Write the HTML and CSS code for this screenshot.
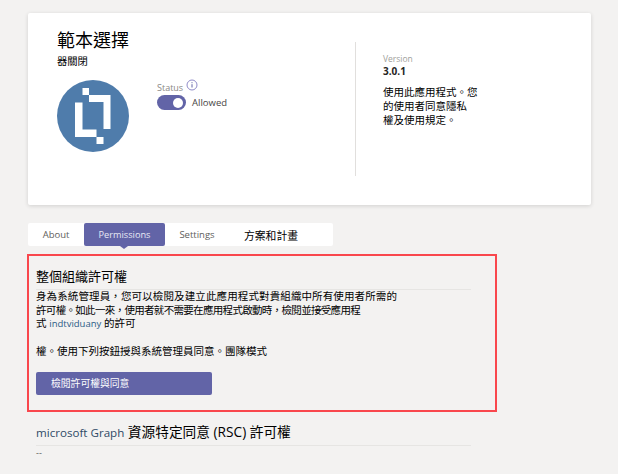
FILE: index.html
```html
<!DOCTYPE html>
<html lang="zh-Hant">
<head>
    <meta charset="UTF-8">
    <title>範本選擇器關閉</title>
    <link rel="stylesheet" href="styles.css">
</head>
<body>
    <div class="card">
        <div class="card-main">
            <div class="app-title">範本選擇</div>
            <div class="app-sub">器關閉</div>
            <div class="app-row">
                <svg class="logo" width="72" height="72" viewBox="0 0 72 72">
                    <circle cx="36" cy="36" r="36" fill="#4f7cab"/>
                    <path fill="#fff" d="M18 22.500h7.500v27h14v7.500h-21.500zM39.500 57h7v7h-7zM32 15h21.500v34h-7v-27h-14.500zM25.500 8h6.500v7h-6.500z"/>
                </svg>
                <div class="status">
                    <div class="status-label">Status
                        <svg class="info" width="12" height="12" viewBox="0 0 12 12">
                            <circle cx="6" cy="6" r="5" fill="none" stroke="#8f8bc8" stroke-width="1"/>
                            <path d="M6 5.200v3.300M6 3.200v1" stroke="#6264a7" stroke-width="1"/>
                        </svg>
                    </div>
                    <div class="status-row">
                        <span class="toggle"><span class="knob"></span></span>
                        <span class="allowed">Allowed</span>
                    </div>
                </div>
            </div>
        </div>
        <div class="card-side">
            <div class="version-label">Version</div>
            <div class="version">3.0.1</div>
            <p class="side-text">使用此應用程式。您<br>的使用者同意隱私<br>權及使用規定。</p>
        </div>
    </div>

    <div class="tabs">
        <div class="tab">About</div>
        <div class="tab active">Permissions</div>
        <div class="tab">Settings</div>
        <div class="tab dark">方案和計畫</div>
    </div>

    <div class="red-box">
        <h2 class="box-title">整個組織許可權</h2>
        <div class="box-text">
            <div class="line-wide">身為系統管理員，您可以檢閱及建立此應用程式對貴組織中所有使用者所需的</div>
            <div class="line-tight">許可權。如此一來，使用者就不需要在應用程式啟動時，檢閱並接受應用程</div>
            <div>式 <span class="latin">indtviduany</span> 的許可</div>
            <div class="line-gap">權。使用下列按鈕授與系統管理員同意。團隊模式</div>
        </div>
        <div class="review-btn">檢閱許可權與同意</div>
    </div>

    <div class="rsc">
        <h2 class="rsc-title"><span class="latin-title">microsoft Graph</span> 資源特定同意 (RSC) 許可權</h2>
        <div class="rsc-dash">--</div>
    </div>
</body>
</html>
```

FILE: styles.css
```css
* {
    box-sizing: border-box;
}
html, body {
    height: 100%;
}
body {
    margin: 0;
    padding: 13px 27px 0 27px;
    background-color: #f3f2f1;
    color: #000;
    font-family: "Open Sans", "Noto Sans CJK TC", sans-serif;
    overflow: hidden;
}
.card {
    display: flex;
    width: 563px;
    height: 192px;
    margin-left: 1px;
    background-color: #fff;
    border-radius: 2px;
    box-shadow: 0 1px 4px rgba(0,0,0,0.14);
}
.card-main {
    width: 327px;
    padding: 15px 0 0 29px;
}
.app-title {
    font-size: 18px;
    line-height: 24px;
}
.app-sub {
    font-size: 10.300px;
    line-height: 14px;
    margin-top: 2px;
}
.app-row {
    display: flex;
    margin-top: 12px;
}
.logo {
    display: block;
}
.status {
    margin-left: 28px;
}
.status-label {
    display: flex;
    align-items: center;
    gap: 3px;
    height: 14px;
    font-size: 9px;
    color: #8a8886;
}
.info {
    margin-top: -4px;
}
.status-row {
    display: flex;
    align-items: center;
    gap: 6px;
    margin-top: 1px;
}
.toggle {
    display: flex;
    align-items: center;
    justify-content: flex-end;
    width: 29px;
    height: 15px;
    padding-right: 3px;
    border-radius: 8px;
    background-color: #6264a7;
}
.knob {
    width: 10px;
    height: 10px;
    border-radius: 50%;
    background-color: #fff;
}
.allowed {
    font-size: 9.500px;
    color: #484644;
}
.card-side {
    width: 200px;
    height: 134px;
    margin-top: 29px;
    padding: 11px 0 0 27px;
    border-left: 1px solid #e1dfdd;
}
.version-label {
    font-size: 8.500px;
    line-height: 12px;
    color: #a19f9d;
}
.version {
    font-size: 10px;
    font-weight: 700;
    line-height: 13px;
    color: #252423;
}
.side-text {
    margin: 7px 0 0 0;
    font-size: 10.500px;
    line-height: 14px;
}
.tabs {
    display: flex;
    align-items: stretch;
    width: 305px;
    height: 23px;
    margin: 18px 0 0 1px;
    background-color: #fff;
    border-radius: 2px;
}
.tab {
    position: relative;
    display: flex;
    align-items: center;
    justify-content: center;
    width: 56px;
    font-size: 9.500px;
    color: #605e5c;
}
.tab.active {
    width: 81px;
    background-color: #6264a7;
    color: #e8e8f4;
    border-radius: 2px;
    font-size: 9.200px;
}
.tab.active::after {
    content: "";
    position: absolute;
    left: 36px;
    bottom: -3px;
    border-left: 4px solid transparent;
    border-right: 4px solid transparent;
    border-top: 3px solid #6264a7;
}
.tab:nth-child(3) {
    width: 64px;
}
.tab.dark {
    width: 84px;
    font-size: 10.800px;
    color: #000;
}
.red-box {
    width: 470px;
    height: 158px;
    margin-top: 8px;
    padding: 10px 7px 0 7px;
    border: 2px solid #f9474d;
}
.box-title {
    width: 435px;
    margin: 0;
    padding-bottom: 3px;
    font-size: 13px;
    font-weight: 400;
    line-height: 20px;
    border-bottom: 1px solid #e6e5e3;
}
.box-text {
    font-size: 10.500px;
    line-height: 13.700px;
    white-space: nowrap;
}
.line-wide {
    letter-spacing: 0.12px;
}
.line-tight {
    letter-spacing: -0.68px;
}
.line-gap {
    margin-top: 13.700px;
}
.latin {
    font-size: 9.500px;
    color: #2b5c86;
}
.review-btn {
    display: flex;
    align-items: center;
    width: 176px;
    height: 23px;
    margin-top: 13px;
    padding-left: 15px;
    background-color: #6264a7;
    border-radius: 2px;
    font-size: 9.800px;
    color: #fff;
}
.rsc {
    width: 435px;
    margin: 9px 0 0 9px;
}
.rsc-title {
    margin: 0;
    padding-bottom: 2px;
    font-size: 13.700px;
    font-weight: 400;
    line-height: 21px;
    white-space: nowrap;
    border-bottom: 1px solid #e6e5e3;
}
.latin-title {
    font-size: 11.600px;
    color: #2f4a66;
}
.rsc-dash {
    font-size: 9px;
    line-height: 14px;
    color: #605e5c;
}
```
